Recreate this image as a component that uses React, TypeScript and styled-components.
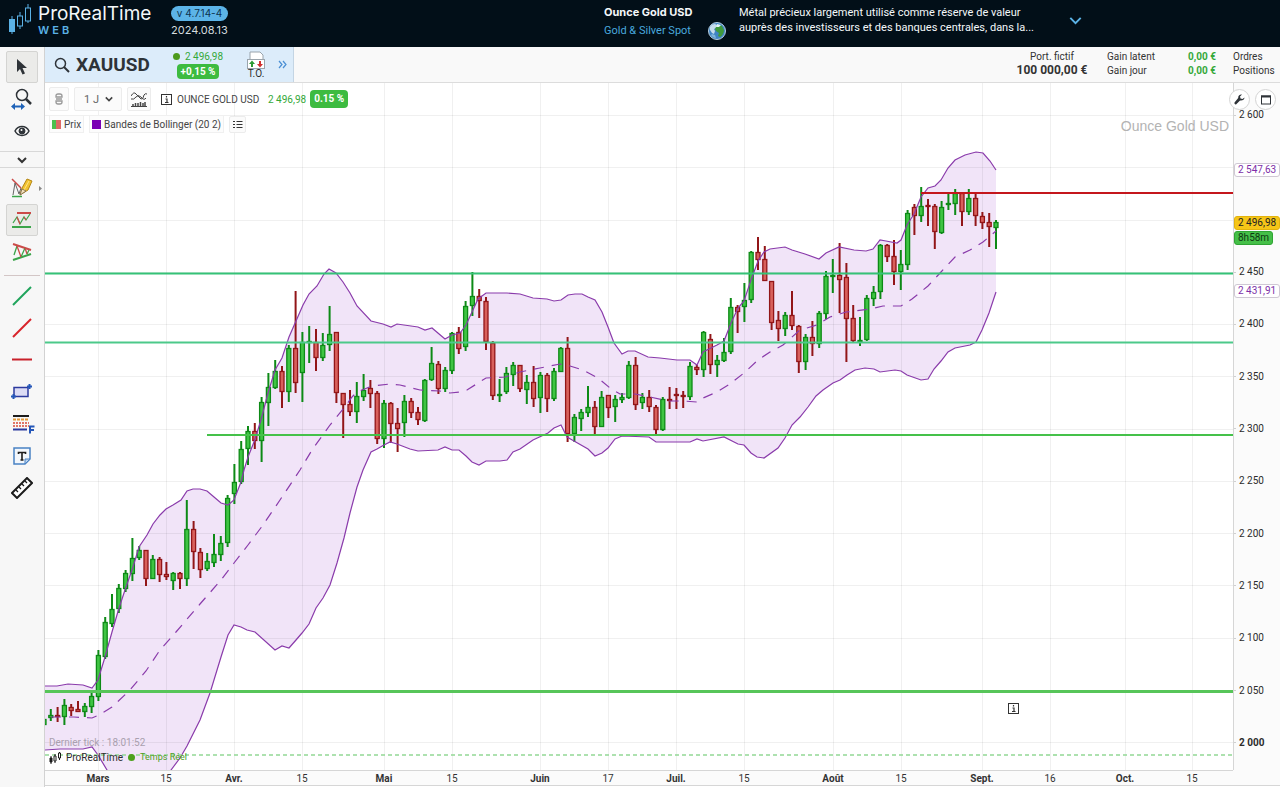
import React from "react";
import styled, { createGlobalStyle, css } from "styled-components";

const GlobalStyle = createGlobalStyle`
  * { box-sizing: border-box; }
  body { margin: 0; background: #fff; font-family: Roboto, "Liberation Sans", Arial, sans-serif; color: #2c2c2c; }
  button, select { font: inherit; color: inherit; }
  h1, p, ul { margin: 0; padding: 0; }
`;

/* ---------- layout ---------- */

const Page = styled.div`
  min-height: 100vh;
  display: flex;
  flex-direction: column;
`;

const Header = styled.header`
  height: 47px;
  flex: none;
  display: flex;
  align-items: flex-start;
  background: #020f18;
  color: #f4f8fa;
  font-family: Inter, sans-serif;
`;

const Workspace = styled.div`
  flex: 1;
  display: flex;
`;

const Main = styled.main`
  flex: 1;
  min-width: 0;
  display: flex;
  flex-direction: column;
`;

/* ---------- header ---------- */

const Brand = styled.a`
  display: flex;
  gap: 6px;
  padding: 4px 0 0 8px;
  color: inherit;
  text-decoration: none;
`;

const BrandName = styled.div`
  width: 112px;
  font-size: 19px;
  line-height: 20px;
`;

const BrandSub = styled.div`
  font-size: 11px;
  line-height: 12px;
  font-weight: 600;
  letter-spacing: 3px;
  color: #5bb2e6;
`;

const Version = styled.div`
  padding: 6px 0 0 21px;
  font-size: 11px;
`;

const VersionTag = styled.div`
  width: 57px;
  height: 15px;
  border-radius: 8px;
  background: #5cb4e8;
  color: #0c3350;
  font-size: 10px;
  line-height: 15px;
  text-align: center;
`;

const VersionDate = styled.div`
  line-height: 18px;
  color: #d5dcdf;
`;

const Instrument = styled.div`
  display: flex;
  margin: 0 198px 0 auto;
  padding-top: 5px;
  white-space: nowrap;
`;

const InstrumentBlock = styled.div`
  width: 90px;
`;

const InstrumentName = styled.div`
  font-size: 11px;
  line-height: 15px;
  font-weight: 700;
`;

const MarketLink = styled.a`
  display: block;
  margin-top: 3px;
  font: 11px/15px Roboto, sans-serif;
  color: #49a9de;
  text-decoration: none;
`;

const GlobeSlot = styled.div`
  padding: 17px 13px 0 14px;
  height: 36px;
`;

const Description = styled.p`
  width: 310px;
  font: 11px/15px Roboto, sans-serif;
`;

const PlainButton = styled.button`
  display: flex;
  align-items: center;
  justify-content: center;
  padding: 0;
  border: 0;
  background: none;
  cursor: pointer;
`;

const ExpandButton = styled(PlainButton)`
  height: 30px;
  width: 14px;
  margin-left: 19px;
`;

/* ---------- left tool bar ---------- */

const Tools = styled.nav`
  width: 45px;
  flex: none;
  display: flex;
  flex-direction: column;
  align-items: center;
  padding-top: 4px;
  background: #f7f7f7;
  border-right: 1px solid #d2d2d2;
`;

const ToolButton = styled(PlainButton)<{ $active?: boolean }>`
  position: relative;
  width: 32px;
  height: 32px;
  border-radius: 2px;
  ${(p) => p.$active && css`background: #ebebe9; border: 1px solid #d4d4d2;`}
`;

const ShapeTools = styled.div`
  height: 221px;
  display: grid;
  grid-auto-rows: 1fr;
  align-items: center;
`;

const SubmenuMark = styled.span`
  position: absolute;
  right: -4px;
  display: flex;
`;

const ToolFold = styled(PlainButton)`
  width: 100%;
  height: 17px;
  margin: 4px 0;
  border-top: 1px solid #d8d8d8;
  border-bottom: 1px solid #d8d8d8;
`;

const ToolRule = styled.hr`
  width: 36px;
  margin: 7px 0 4px;
  border: 0;
  border-top: 1px solid #d3c6c6;
`;

/* ---------- symbol bar ---------- */

const SymbolBar = styled.div`
  height: 36px;
  display: flex;
  justify-content: space-between;
  background: #f9f9f9;
  border-bottom: 1px solid #dcdcdc;
`;

const SymbolZone = styled.div`
  width: 249px;
  display: flex;
  align-items: center;
  padding-left: 9px;
  background: #dcecfa;
  border-right: 1px solid #c4d5e4;
`;

const SymbolName = styled.h1`
  width: 81px;
  margin-left: 6px;
  font: 700 19px/24px Roboto, sans-serif;
  color: #2e3338;
`;

const Quote = styled.div`
  display: flex;
  flex-direction: column;
  align-items: center;
  width: 52px;
  margin-left: 15px;
  gap: 1px;
`;

const QuotePrice = styled.div`
  display: flex;
  align-items: center;
  gap: 5px;
  font-size: 10px;
  line-height: 13px;
  white-space: nowrap;
  color: #35a839;
`;

const Dot = styled.i<{ $color: string }>`
  flex: none;
  width: 7px;
  height: 7px;
  border-radius: 50%;
  background: ${(p) => p.$color};
`;

const ChangeTag = styled.span<{ $width: number; $height: number }>`
  width: ${(p) => p.$width}px;
  height: ${(p) => p.$height}px;
  line-height: ${(p) => p.$height}px;
  border-radius: 4px;
  background: #3dbb40;
  color: #fff;
  font-size: 10px;
  font-weight: 700;
  text-align: center;
`;

const OrderButton = styled(PlainButton)`
  flex-direction: column;
  width: 24px;
  margin-left: 20px;
  font-size: 10px;
  line-height: 10px;
`;

const MoreButton = styled(PlainButton)`
  width: 10px;
  margin-left: 9px;
`;

const Account = styled.div`
  display: flex;
  padding: 3px 5px 0 0;
  font-size: 10px;
  line-height: 14px;
  color: #333;
`;

const Portfolio = styled.div`
  width: 72px;
  text-align: center;
  white-space: nowrap;
`;

const PortfolioValue = styled.strong`
  display: block;
  font-size: 12px;
  line-height: 13px;
`;

const Gains = styled.dl`
  width: 109px;
  margin: 0 17px 0 19px;
  display: grid;
  grid-template-columns: 1fr auto;
  align-content: start;
`;

const GainValue = styled.dd`
  margin: 0;
  font-weight: 700;
  color: #35a839;
`;

const AccountLinks = styled.div`
  width: 42px;
`;

const AccountLink = styled.a`
  display: block;
  color: inherit;
  text-decoration: none;
`;

/* ---------- chart ---------- */

const ChartGrid = styled.div`
  display: grid;
  grid-template-columns: minmax(0, 1fr) 47px;
  grid-template-rows: 687px 16px auto;
  background: #fbfbfb;
`;

const Plot = styled.section`
  position: relative;
  background: #fff;
`;

const PlotDrawing = styled.svg`
  display: block;
  width: 100%;
  height: 100%;
`;

const ChartHead = styled.div`
  position: absolute;
  top: 4px;
  left: 4px;
  display: flex;
  flex-direction: column;
  gap: 4px;
`;

const HeadRow = styled.div`
  display: flex;
  align-items: center;
  font-size: 10px;
  color: #444;
`;

const BoxButton = styled(PlainButton)<{ $width: number; $height?: number }>`
  width: ${(p) => p.$width}px;
  height: ${(p) => p.$height ?? 24}px;
  border: 1px solid #ececec;
  border-radius: 2px;
  background: #fbfbfb;
`;

const InfoButton = styled(PlainButton)`
  margin-left: 10px;
`;

const PeriodBox = styled.label`
  position: relative;
  display: flex;
  align-items: center;
  width: 48px;
  height: 24px;
  margin: 0 5px;
  border: 1px solid #ececec;
  border-radius: 2px;
  background: #fbfbfb;
`;

const PeriodSelect = styled.select`
  width: 100%;
  height: 100%;
  padding: 0 0 0 9px;
  border: 0;
  background: none;
  appearance: none;
  font-size: 11px;
  color: #666;
`;

const PeriodArrow = styled.span`
  position: absolute;
  right: 8px;
  display: flex;
  pointer-events: none;
`;

const InstrumentTitle = styled.span`
  min-width: 87px;
  margin: 0 4px 0 5px;
`;

const LastPrice = styled.span`
  margin-right: 4px;
  color: #35a839;
`;

const Legend = styled.span`
  display: flex;
  align-items: center;
  gap: 3px;
  height: 18px;
  padding: 0 2px;
  margin-right: 5px;
  border: 1px solid #f0f0f0;
  background: #fcfcfc;
`;

const Swatch = styled.i<{ $left: string; $right: string }>`
  width: 9px;
  height: 9px;
  background: linear-gradient(90deg, ${(p) => p.$left} 50%, ${(p) => p.$right} 50%);
`;

const Watermark = styled.div`
  position: absolute;
  top: 33px;
  right: 4px;
  font: 14px/20px "Liberation Sans", Arial, sans-serif;
  color: #b3b3b3;
`;

const ChartFoot = styled.div`
  position: absolute;
  left: 4px;
  bottom: 5px;
  font-size: 10px;
  line-height: 15px;
`;

const LastTick = styled.div`
  color: #a9a0ae;
`;

const FeedRow = styled.div`
  display: flex;
  align-items: center;
  gap: 5px;
`;

const FeedStatus = styled.span`
  font-size: 9px;
  color: #4da01c;
`;

const RoundButtons = styled.div`
  position: absolute;
  top: 6px;
  right: 4px;
  display: flex;
  gap: 5px;
`;

const RoundButton = styled(PlainButton)`
  width: 21px;
  height: 21px;
  border: 1px solid #d4d4d4;
  border-radius: 50%;
  background: #fff;
`;

const PriceAxis = styled.aside`
  position: relative;
  border-left: 1px solid #d6d6d6;
`;

const PriceTicks = styled.ul`
  height: 680px;
  margin-top: 6px;
  display: grid;
  grid-auto-rows: 1fr;
  align-items: center;
  list-style: none;
`;

const PriceTick = styled.li<{ $strong?: boolean; $hidden?: boolean }>`
  display: flex;
  align-items: center;
  gap: 3px;
  font-size: 10px;
  line-height: 12px;
  font-weight: ${(p) => (p.$strong ? 700 : 400)};
  visibility: ${(p) => (p.$hidden ? "hidden" : "visible")};

  &::before {
    content: "";
    width: 2px;
    border-top: 1px solid #d0d0d0;
  }
`;

const PriceBadge = styled.div<{ $top: number; $kind: "band" | "last" | "timer" }>`
  position: absolute;
  top: ${(p) => p.$top}px;
  left: 0;
  height: 14px;
  padding: 0 3px;
  border: 1px solid #cfc8d4;
  border-radius: 3px;
  background: #fff;
  color: #7d2fa8;
  font-size: 10px;
  line-height: 12px;
  white-space: nowrap;
  ${(p) => p.$kind === "last" && css`background: #f5c518; border-color: #e3b30c; color: #222;`}
  ${(p) => p.$kind === "timer" && css`background: #45bf48; border-color: #2fa433; color: #0d3a10;`}
`;

const TimeAxis = styled.svg`
  width: 100%;
  height: 16px;
  border-top: 1px solid #d6d6d6;
  border-bottom: 1px solid #d6d6d6;
  font-size: 10px;
`;

const AxisCorner = styled.div`
  border-bottom: 1px solid #d6d6d6;
`;

/* ---------- chart data ---------- */

// [top of wick, bottom of wick, top of body, bottom of body, rising]
type Candle = [number, number, number, number, 0 | 1];

const candles: Candle[] = [
  [717,726,719,725,1],[709,721,715,718,1],[707,722,715,717,0],[699,725,705,717,1],[704,716,707,711,0],
  [701,712,709,712,0],[703,717,706,712,1],[693,713,696,707,1],[650,701,655,697,1],[617,659,622,657,1],
  [594,627,609,624,1],[584,613,588,609,1],[570,592,573,589,1],[538,581,558,574,1],[546,560,550,558,1],
  [550,586,550,579,0],[555,579,559,579,1],[557,582,559,575,0],[562,580,574,577,0],[572,590,573,581,1],
  [572,589,573,579,0],[500,586,529,579,1],[521,569,529,552,0],[548,578,552,570,0],[553,571,561,569,1],
  [534,567,554,563,1],[536,561,543,555,1],[495,547,498,543,1],[464,504,482,494,1],[441,484,449,482,1],
  [426,465,431,449,1],[423,449,431,441,0],[397,462,402,441,1],[373,426,387,403,1],[360,389,371,388,1],
  [366,408,371,392,0],[345,402,348,392,1],[291,393,348,383,0],[332,402,342,373,1],[326,363,341,343,1],
  [329,371,342,358,0],[333,361,345,358,1],[306,351,334,345,1],[332,403,332,393,0],[393,438,393,405,0],
  [390,416,404,412,0],[382,423,396,412,1],[374,401,390,397,1],[380,408,388,394,0],[391,444,393,439,0],
  [400,448,403,439,1],[402,443,403,424,0],[408,452,423,429,0],[395,437,401,423,1],[398,418,401,413,0],
  [407,425,412,420,0],[379,422,380,421,1],[347,381,363,380,1],[361,394,364,389,0],[367,392,370,389,1],
  [332,374,333,371,1],[327,354,332,349,0],[301,351,306,347,1],[272,316,296,306,1],[289,318,296,301,0],
  [297,350,301,342,0],[341,400,343,396,0],[379,402,394,396,1],[367,394,373,392,1],[362,386,365,375,1],
  [365,392,365,389,0],[375,404,382,390,1],[366,407,382,399,0],[372,413,375,398,1],[373,412,375,399,0],
  [368,401,371,399,1],[347,372,348,372,1],[337,442,348,434,0],[414,442,417,434,1],[409,431,412,419,1],
  [386,417,407,413,1],[401,434,407,427,0],[391,427,397,427,1],[395,418,395,408,0],[395,422,399,407,1],
  [393,403,397,400,1],[361,399,365,398,1],[357,410,365,405,0],[393,409,397,403,1],[390,412,397,407,0],
  [405,434,407,430,0],[397,431,399,430,1],[387,409,399,401,0],[388,409,394,396,0],[391,408,395,397,0],
  [362,400,366,397,1],[365,375,367,370,0],[331,377,332,370,1],[334,374,339,365,0],[355,377,360,365,1],
  [338,362,352,361,1],[298,354,307,352,1],[305,333,307,312,0],[283,322,300,307,1],[251,303,252,300,1],
  [237,270,252,260,0],[246,281,259,281,0],[281,330,281,323,0],[311,341,320,329,0],[312,336,315,329,1],
  [291,330,315,326,0],[325,373,326,362,0],[334,370,337,362,1],[321,356,337,344,0],[311,348,313,344,1],
  [271,319,276,314,1],[259,293,275,277,1],[243,313,275,280,0],[263,362,277,319,0],[305,342,318,341,0],
  [317,346,340,342,1],[295,341,298,340,1],[286,306,292,299,1],[244,299,245,292,1],[244,262,245,257,0],
  [240,285,256,272,0],[250,290,264,272,1],[210,270,213,265,1],[204,235,207,216,0],[187,222,206,216,1],
  [199,226,205,207,0],[204,249,206,232,0],[201,234,207,233,1],[193,210,203,205,1],[189,215,193,204,1],
  [193,226,193,212,0],[189,215,198,212,1],[193,226,198,216,0],[212,229,216,223,0],[213,247,222,227,0],
  [220,249,222,228,1],
];

const upper =
  "45,686 57,686 68,684 83,685 92,688 98,680 105,657 112,632 119,608 126,587 133,567 139,547 147,535 153,524 160,515 166,509 173,505 181,500 187,491 193,489 200,489 207,491 214,497 221,503 228,505 234,500 241,482 244,470 248,457 254,442 261,420 268,393 275,370 282,358 289,337 296,321 303,305 309,294 317,286 324,274 329,269 336,273 343,282 350,293 357,306 371,321 383,324 391,327 397,324 418,327 425,330 432,328 445,339 452,335 460,333 466,325 472,312 478,299 486,293 507,293 520,294 533,298 547,299 554,301 561,300 568,295 575,294 582,294 588,297 595,300 602,312 608,327 614,343 622,354 628,351 635,351 648,357 660,358 677,360 690,360 697,365 703,352 717,345 724,341 731,323 738,308 744,301 751,280 758,261 764,252 770,249 785,247 792,250 805,254 819,259 826,253 839,247 854,250 866,251 873,249 880,240 886,241 897,243 901,240 907,225 914,214 921,197 928,188 935,186 941,180 948,168 955,160 965,155 976,152 983,153 990,161 996,170";

const lower =
  "45,750 60,749 83,749 92,747 98,755 107,770 112,780 165,780 171,770 180,758 187,746 200,720 210,693 221,657 228,635 234,625 241,627 247,630 255,632 275,650 282,646 289,648 296,640 302,633 309,624 316,608 323,598 330,585 337,563 344,538 350,513 357,487 363,470 371,452 377,449 384,445 390,442 397,444 410,449 418,451 438,450 445,447 452,450 459,450 466,456 472,462 479,465 486,461 500,461 507,460 513,452 520,449 533,440 548,433 554,428 561,425 567,437 574,441 588,449 595,456 602,453 608,448 615,439 622,436 649,437 656,442 690,442 697,439 703,441 724,437 738,444 744,445 751,453 757,457 764,458 778,448 785,438 792,425 800,417 808,407 816,396 823,390 833,383 840,380 847,375 855,370 865,368 874,369 880,372 895,370 901,371 907,375 921,380 928,379 934,369 941,361 948,352 955,348 970,345 976,342 982,330 989,313 996,292";

const middle =
  "51,717 74,717 92,718 99,715 112,707 130,690 146,671 160,650 176,632 200,604 221,580 234,563 248,545 263,525 280,500 300,470 312,450 330,425 344,408 352,397 357,392 372,386 390,384 400,385 420,390 440,391 450,393 460,392 467,390 486,378 505,377 520,372 540,368 560,364 570,366 583,370 598,378 610,388 620,394 635,394 650,397 668,401 683,401 697,402 703,398 717,392 730,384 744,373 758,360 770,352 783,345 800,330 817,325 830,317 846,312 870,309 883,306 901,306 912,299 928,286 941,272 955,257 970,250 983,242 996,231";

const reversed = (points: string) => points.split(" ").reverse().join(" ");

const plotLeft = 45;
const plotWidth = 1188;

const times: { x: number; label: string; strong?: boolean }[] = [
  { x: 98, label: "Mars", strong: true },
  { x: 166, label: "15" },
  { x: 234, label: "Avr.", strong: true },
  { x: 302, label: "15" },
  { x: 384, label: "Mai", strong: true },
  { x: 452, label: "15" },
  { x: 540, label: "Juin", strong: true },
  { x: 608, label: "17" },
  { x: 676, label: "Juil.", strong: true },
  { x: 744, label: "15" },
  { x: 833, label: "Août", strong: true },
  { x: 901, label: "15" },
  { x: 982, label: "Sept.", strong: true },
  { x: 1050, label: "16" },
  { x: 1125, label: "Oct.", strong: true },
  { x: 1192, label: "15" },
];

const priceRows = Array.from({ length: 13 }, (_, i) => Math.round(115 + i * 52.27));
const prices = ["2 600", "2 550", "2 500", "2 450", "2 400", "2 350", "2 300", "2 250", "2 200", "2 150", "2 100", "2 050", "2 000"];
const coveredPrices = ["2 550", "2 500"];

const levels = [
  { from: 45, y: 273.5, color: "#35c277", width: 2 },
  { from: 45, y: 342.5, color: "#4cc98a", width: 2 },
  { from: 207, y: 435, color: "#45c14a", width: 2 },
  { from: 921, y: 193, color: "#c4161c", width: 2 },
];

/* ---------- icons ---------- */

const LogoIcon = () => (
  <svg width="24" height="32" viewBox="0 0 24 32" fill="none" stroke="#5bb2e6">
    <path d="M4 12v18M12 8v4M12 22v3M20 0v4M20 17v2" />
    <rect x="1.5" y="15.500" width="5" height="12" fill="#5bb2e6" />
    <rect x="9.500" y="12" width="5" height="10" />
    <rect x="17.500" y="4" width="5" height="13" />
  </svg>
);

const GlobeIcon = () => (
  <svg width="18" height="18" viewBox="0 0 18 18">
    <circle cx="9" cy="9" r="8.500" fill="#3f84c4" stroke="#b9d0e0" />
    <path d="M2 5c1-2 3-3 5-3l2 1-1 3-2 1 1 2-1 3-2-1-2-3z" fill="#c5dcec" />
    <path d="M8 5c2-2 5-2 6-1l2 4c0 3-2 6-4 7l-2-1 1-3-3-2-1-2z" fill="#3f9a3c" />
    <path d="M4 12l3 1 1 3c-2 0-4-1-5-3z" fill="#7fb4dc" />
    <path d="M9 2l4 1-2 2-3 0z" fill="#e5f2f8" />
  </svg>
);

const Chevron = ({ color, size = 10, width = 1.5 }: { color: string; size?: number; width?: number }) => (
  <svg width={size} height={size} viewBox="0 0 10 10" fill="none" stroke={color} strokeWidth={width}>
    <path d="M1 3l4 4 4-4" />
  </svg>
);

const CursorIcon = () => (
  <svg width="14" height="18" viewBox="0 0 14 18">
    <path d="M2 1v13l3-3 2.500 5.500 2.500-1-2.500-5.500H12z" fill="#2e3338" />
  </svg>
);

const ZoomRangeIcon = () => (
  <svg width="22" height="22" viewBox="0 0 22 22" fill="none">
    <circle cx="11" cy="7" r="5.500" stroke="#2e3338" strokeWidth="1.500" />
    <path d="M15 11l5 5" stroke="#2e3338" strokeWidth="2.500" />
    <path d="M2 18.500h10" stroke="#1f63b8" strokeWidth="2" />
    <path d="M4 15l-4 3.500L4 22zM10 15l4 3.500-4 3.500z" fill="#1f63b8" />
  </svg>
);

const EyeIcon = () => (
  <svg width="16" height="12" viewBox="0 0 16 12" fill="none" stroke="#2e3338">
    <path d="M1 6c3-6 11-6 14 0-3 6-11 6-14 0z" strokeWidth="1.500" />
    <circle cx="8" cy="6" r="3" fill="#2e3338" />
    <circle cx="7.500" cy="5" r="1" fill="#fff" stroke="none" />
  </svg>
);

const PencilIcon = () => (
  <svg width="22" height="20" viewBox="0 0 22 20" fill="none">
    <path d="M1 18.500h10" stroke="#3aa54a" strokeWidth="1.500" />
    <path d="M1 1l9 9" stroke="#cc4a48" strokeWidth="1.500" />
    <path d="M2 17L4 5l4 11 2-6" stroke="#666" />
    <path d="M9 17l2-7 5-9 5 2-4 9z" fill="#f2c230" stroke="#b48716" />
    <path d="M13 12l5-9" stroke="#fbe48a" />
    <path d="M9 17l2-6 4 2z" fill="#f6e3bd" stroke="#6a5a4a" strokeWidth=".7" />
  </svg>
);

const LevelsIcon = () => (
  <svg width="20" height="18" viewBox="0 0 20 18" fill="none">
    <path d="M5 2h14" stroke="#cc4a48" strokeWidth="2" />
    <path d="M0 16h19" stroke="#3aa54a" strokeWidth="2" />
    <path d="M1 12l4-6 3 7 4-7 2 3 4-6" stroke="#3aa54a" strokeWidth="1.200" />
    <path d="M5 6l3 7M12 6l2 3" stroke="#cc4a48" strokeWidth="1.200" />
  </svg>
);

const TriangleIcon = () => (
  <svg width="20" height="20" viewBox="0 0 20 20" fill="none">
    <path d="M1 2l18 6" stroke="#cc4a48" strokeWidth="2" />
    <path d="M1 18l18-6" stroke="#3aa54a" strokeWidth="2" />
    <path d="M2 13l3-9M9 15l4-9M15 12l2-4" stroke="#3aa54a" strokeWidth="1.300" />
    <path d="M5 4l4 11M13 6l2 6" stroke="#cc4a48" strokeWidth="1.300" />
  </svg>
);

const SegmentIcon = ({ color, flat }: { color: string; flat?: boolean }) => (
  <svg width="22" height="20" viewBox="0 0 22 20">
    <path d={flat ? "M1 9.500h20" : "M2 19L20 1"} stroke={color} strokeWidth="2" />
  </svg>
);

const RectangleIcon = () => (
  <svg width="22" height="16" viewBox="0 0 22 16" fill="none" stroke="#2c3a9e">
    <rect x="3" y="3.500" width="14" height="9" fill="#dcdcf5" strokeWidth="1.500" />
    <path d="M18.500 0v5M16 2.500h5M2.500 10v5M0 12.500h5" stroke="#2456b8" strokeWidth="2" />
  </svg>
);

const FiboIcon = () => (
  <svg width="26" height="20" viewBox="0 0 26 20" fill="none">
    <path d="M4 2h16" stroke="#1c1c1c" strokeWidth="2" />
    <path d="M4 5.500h16" stroke="#e59a3a" strokeWidth="2" strokeDasharray="3 1" />
    <path d="M4 9h16M4 12h16" stroke="#d84b3a" strokeWidth="1.500" strokeDasharray="2 1" />
    <path d="M4 15.500h14" stroke="#2c3a9e" strokeWidth="2" />
    <path d="M21 19.500v-7h4.500M21 16h4" stroke="#2456b8" strokeWidth="2" />
  </svg>
);

const TextIcon = () => (
  <svg width="18" height="18" viewBox="0 0 18 18" fill="none">
    <path d="M1 1h16v11l-5 5H1z" fill="#f3f7fc" stroke="#4a82c4" strokeWidth="1.500" />
    <path d="M12 17v-5h5z" fill="#bcd4ee" stroke="#4a82c4" />
    <path d="M5.500 7V5.500h7V7M9 5.500V13M7.500 13h3" stroke="#1c1c1c" strokeWidth="1.600" />
  </svg>
);

const RulerIcon = () => (
  <svg width="22" height="22" viewBox="0 0 22 22" fill="none" stroke="#1c1c1c">
    <path d="M1 16L16 1l5 5L6 21z" strokeWidth="2" fill="#fff" />
    <path d="M5 13l2 2M8 10l2 2M11 7l2 2M14 4l2 2" strokeWidth="1.300" />
  </svg>
);

const SearchIcon = () => (
  <svg width="16" height="16" viewBox="0 0 16 16" fill="none" stroke="#2e3338" strokeWidth="1.500">
    <circle cx="6.500" cy="6.500" r="5" />
    <path d="M10 10l5 5" strokeWidth="2" />
  </svg>
);

const OrderIcon = () => (
  <svg width="18" height="18" viewBox="0 0 18 18">
    <path d="M3 10V1h10l3 3v6" fill="#fff" stroke="#9aa4ac" />
    <rect x=".5" y="8.500" width="17" height="9" fill="#fff" stroke="#9aa4ac" />
    <path d="M5 9.500l3 3.500H6v3H4v-3H2z" fill="#2c9a35" />
    <path d="M13 16.500l3-3.500h-2v-3h-2v3h-2z" fill="#d02f2f" />
  </svg>
);

const DoubleArrow = () => (
  <svg width="9" height="9" viewBox="0 0 9 9" fill="none" stroke="#4a8fd4" strokeWidth="1.200">
    <path d="M1 1l3 3.500L1 8M5 1l3 3.500L5 8" />
  </svg>
);

const LinkIcon = () => (
  <svg width="8" height="12" viewBox="0 0 8 12" fill="none" stroke="#999" strokeWidth="1.300">
    <path d="M1 4V3q0-2 2-2h2q2 0 2 2v1zM1 8v1q0 2 2 2h2q2 0 2-2V8zM1 6h6" />
  </svg>
);

const IndicatorIcon = () => (
  <svg width="16" height="16" viewBox="0 0 16 16" fill="none" stroke="#444">
    <path d="M0 5q3-5 5-2l5 5q2 1 3-4 1-2 3-1M0 8q3 1 5-2t5 0q3 4 5 1" />
    <path d="M2 15v-2M4.500 15v-3M7 15v-3M9.500 15v-4M12 15v-3M14 15v-4" strokeWidth="1.500" />
    <path d="M0 15.500h16" />
  </svg>
);

const InfoIcon = () => (
  <svg width="11" height="11" viewBox="0 0 11 11" fill="none" stroke="#333">
    <rect x=".5" y=".5" width="10" height="10" fill="#fff" />
    <path d="M5.500 2v1.500M4.500 5h1.500v3.500M4 8.500h3.500" strokeWidth="1.200" />
  </svg>
);

const ListIcon = () => (
  <svg width="10" height="9" viewBox="0 0 10 9" stroke="#333">
    <path d="M0 1.500h2M0 4.500h2M0 7.500h2M3.500 1.500h6M3.500 4.500h6M3.500 7.500h6" />
  </svg>
);

const WrenchIcon = () => (
  <svg width="11" height="11" viewBox="0 0 11 11">
    <path d="M10.500 3.500L8.500 5 6.500 4.500 6 2.500 8 .5C6 0 4 1.500 4.200 4L.5 8.500q-.5 1.500 1 2Q2 10.500 2.500 10L6 6.500c2.500.5 4.500-1 4.500-3z" fill="#2e3338" />
  </svg>
);

const WindowIcon = () => (
  <svg width="10" height="10" viewBox="0 0 10 10" fill="none" stroke="#2e3338">
    <rect x=".5" y="1" width="9" height="8" />
    <path d="M0 1.500h10" strokeWidth="2" />
  </svg>
);

const MiniCandles = () => (
  <svg width="12" height="12" viewBox="0 0 12 12" stroke="#1c1c1c" fill="none">
    <path d="M2 4v8M6 2v9M10.500 0v8" />
    <path d="M1 6h2v4H1z" fill="#1c1c1c" />
    <path d="M5 4h2v5H5zM9.500 1h2v5h-2z" fill="#fff" />
  </svg>
);

/* ---------- chart drawing ---------- */

const PriceChart = () => (
  <PlotDrawing viewBox="45 83 1188 687" preserveAspectRatio="none" role="img" aria-label="XAUUSD">
    <polygon points={`${upper} ${reversed(lower)}`} fill="#f1e4f8" />
    <g stroke="#000" strokeOpacity=".06" shapeRendering="crispEdges">
      {times.map((t) => (
        <line key={t.x} x1={t.x + 0.5} x2={t.x + 0.5} y1="83" y2="770" />
      ))}
      {priceRows.map((y) => (
        <line key={y} x1="45" x2="1233" y1={y + 0.5} y2={y + 0.5} />
      ))}
    </g>
    {candles.map(([high, low, top, bottom, up], i) => {
      const x = 44 + i * 6.8;
      const edge = up ? "#0d8a16" : "#921518";
      return (
        <g key={i}>
          <line x1={x} x2={x} y1={high} y2={low} stroke={edge} strokeWidth="2" />
          <rect
            x={x - 2}
            y={top + 0.5}
            width="4"
            height={Math.max(bottom - top - 1, 1)}
            fill={up ? "#3fc443" : "#d8605c"}
            stroke={edge}
            strokeWidth="1.300"
          />
        </g>
      );
    })}
    <g fill="none" stroke="#8a3bab" strokeWidth="1.200">
      <polyline points={upper} />
      <polyline points={lower} />
      <polyline points={middle} strokeDasharray="10 8" />
    </g>
    {levels.map((l) => (
      <line key={l.y} x1={l.from} x2="1233" y1={l.y} y2={l.y} stroke={l.color} strokeWidth={l.width} />
    ))}
    <line x1="45" x2="1233" y1="691.500" y2="691.500" stroke="#57c559" strokeWidth="3" />
    <line x1="45" x2="1233" y1="755" y2="755" stroke="#93d795" strokeWidth="1.500" strokeDasharray="4 3" />
    <g transform="translate(1008 703)" fill="none" stroke="#333">
      <rect x=".5" y=".5" width="10" height="10" fill="#fff" />
      <path d="M5.500 2v1.500M4.500 5h1.500v3.500M4 8.500h3.500" strokeWidth="1.200" />
    </g>
  </PlotDrawing>
);

export default function App() {
  return (
    <Page>
      <GlobalStyle />
      <Header>
        <Brand href="#">
          <LogoIcon />
          <div>
            <BrandName>ProRealTime</BrandName>
            <BrandSub>WEB</BrandSub>
          </div>
        </Brand>
        <Version>
          <VersionTag>v 4.7.14-4</VersionTag>
          <VersionDate>2024.08.13</VersionDate>
        </Version>
        <Instrument>
          <InstrumentBlock>
            <InstrumentName>Ounce Gold USD</InstrumentName>
            <MarketLink href="#">Gold &amp; Silver Spot</MarketLink>
          </InstrumentBlock>
          <GlobeSlot>
            <GlobeIcon />
          </GlobeSlot>
          <Description>
            Métal précieux largement utilisé comme réserve de valeur
            <br />
            auprès des investisseurs et des banques centrales, dans la...
          </Description>
          <ExpandButton aria-label="Plus">
            <Chevron color="#5bb2e6" size={13} />
          </ExpandButton>
        </Instrument>
      </Header>

      <Workspace>
        <Tools>
          <ToolButton $active aria-label="Curseur"><CursorIcon /></ToolButton>
          <ToolButton aria-label="Zoom"><ZoomRangeIcon /></ToolButton>
          <ToolButton aria-label="Afficher"><EyeIcon /></ToolButton>
          <ToolFold aria-label="Replier"><Chevron color="#333" width={2} /></ToolFold>
          <ToolButton aria-label="Dessin">
            <PencilIcon />
            <SubmenuMark>
              <svg width="3" height="5" viewBox="0 0 3 5"><path d="M0 0l3 2.500L0 5z" fill="#888" /></svg>
            </SubmenuMark>
          </ToolButton>
          <ToolButton $active aria-label="Niveaux"><LevelsIcon /></ToolButton>
          <ToolButton aria-label="Figures"><TriangleIcon /></ToolButton>
          <ToolRule />
          <ShapeTools>
            <ToolButton aria-label="Ligne verte"><SegmentIcon color="#1fa45c" /></ToolButton>
            <ToolButton aria-label="Ligne rouge"><SegmentIcon color="#d8232a" /></ToolButton>
            <ToolButton aria-label="Ligne horizontale"><SegmentIcon color="#c8202a" flat /></ToolButton>
            <ToolButton aria-label="Rectangle"><RectangleIcon /></ToolButton>
            <ToolButton aria-label="Fibonacci"><FiboIcon /></ToolButton>
            <ToolButton aria-label="Texte"><TextIcon /></ToolButton>
            <ToolButton aria-label="Règle"><RulerIcon /></ToolButton>
          </ShapeTools>
        </Tools>

        <Main>
          <SymbolBar>
            <SymbolZone>
              <SearchIcon />
              <SymbolName>XAUUSD</SymbolName>
              <Quote>
                <QuotePrice>
                  <Dot $color="#4d9a1c" />
                  2 496,98
                </QuotePrice>
                <ChangeTag $width={42} $height={15}>+0,15 %</ChangeTag>
              </Quote>
              <OrderButton>
                <OrderIcon />
                T.O.
              </OrderButton>
              <MoreButton aria-label="Suite"><DoubleArrow /></MoreButton>
            </SymbolZone>
            <Account>
              <Portfolio>
                Port. fictif
                <PortfolioValue>100 000,00 €</PortfolioValue>
              </Portfolio>
              <Gains>
                <dt>Gain latent</dt>
                <GainValue>0,00 €</GainValue>
                <dt>Gain jour</dt>
                <GainValue>0,00 €</GainValue>
              </Gains>
              <AccountLinks>
                <AccountLink href="#">Ordres</AccountLink>
                <AccountLink href="#">Positions</AccountLink>
              </AccountLinks>
            </Account>
          </SymbolBar>

          <ChartGrid>
            <Plot>
              <PriceChart />
              <ChartHead>
                <HeadRow>
                  <BoxButton $width={20} aria-label="Lier"><LinkIcon /></BoxButton>
                  <PeriodBox>
                    <PeriodSelect aria-label="Période" defaultValue="1 J">
                      <option>1 J</option>
                    </PeriodSelect>
                    <PeriodArrow><Chevron color="#444" size={8} width={2} /></PeriodArrow>
                  </PeriodBox>
                  <BoxButton $width={24} aria-label="Indicateurs"><IndicatorIcon /></BoxButton>
                  <InfoButton aria-label="Informations"><InfoIcon /></InfoButton>
                  <InstrumentTitle>OUNCE GOLD USD</InstrumentTitle>
                  <LastPrice>2 496,98</LastPrice>
                  <ChangeTag $width={38} $height={18}>0.15 %</ChangeTag>
                </HeadRow>
                <HeadRow>
                  <Legend>
                    <Swatch $left="#4cc04e" $right="#dd6a66" />
                    Prix
                  </Legend>
                  <Legend>
                    <Swatch $left="#7a00b4" $right="#7a00b4" />
                    Bandes de Bollinger (20 2)
                  </Legend>
                  <BoxButton $width={17} $height={17} aria-label="Liste"><ListIcon /></BoxButton>
                </HeadRow>
              </ChartHead>
              <Watermark>Ounce Gold USD</Watermark>
              <ChartFoot>
                <LastTick>Dernier tick : 18:01:52</LastTick>
                <FeedRow>
                  <MiniCandles />
                  ProRealTime
                  <Dot $color="#4da01c" />
                  <FeedStatus>Temps Réel</FeedStatus>
                </FeedRow>
              </ChartFoot>
            </Plot>
            <PriceAxis>
              <PriceTicks>
                {prices.map((p) => (
                  <PriceTick key={p} $strong={p === "2 000"} $hidden={coveredPrices.includes(p)}>{p}</PriceTick>
                ))}
              </PriceTicks>
              <PriceBadge $top={80} $kind="band">2 547,63</PriceBadge>
              <PriceBadge $top={201} $kind="band">2 431,91</PriceBadge>
              <PriceBadge $top={133} $kind="last">2 496,98</PriceBadge>
              <PriceBadge $top={148} $kind="timer">8h58m</PriceBadge>
              <RoundButtons>
                <RoundButton aria-label="Réglages"><WrenchIcon /></RoundButton>
                <RoundButton aria-label="Fenêtre"><WindowIcon /></RoundButton>
              </RoundButtons>
            </PriceAxis>
            <TimeAxis>
              {times.map((t) => (
                <text
                  key={t.x}
                  x={`${((t.x - plotLeft) / plotWidth) * 100}%`}
                  y="11"
                  textAnchor="middle"
                  fill="#333"
                  fontWeight={t.strong ? 700 : 400}
                >
                  {t.label}
                </text>
              ))}
            </TimeAxis>
            <AxisCorner />
          </ChartGrid>
        </Main>
      </Workspace>
    </Page>
  );
}
